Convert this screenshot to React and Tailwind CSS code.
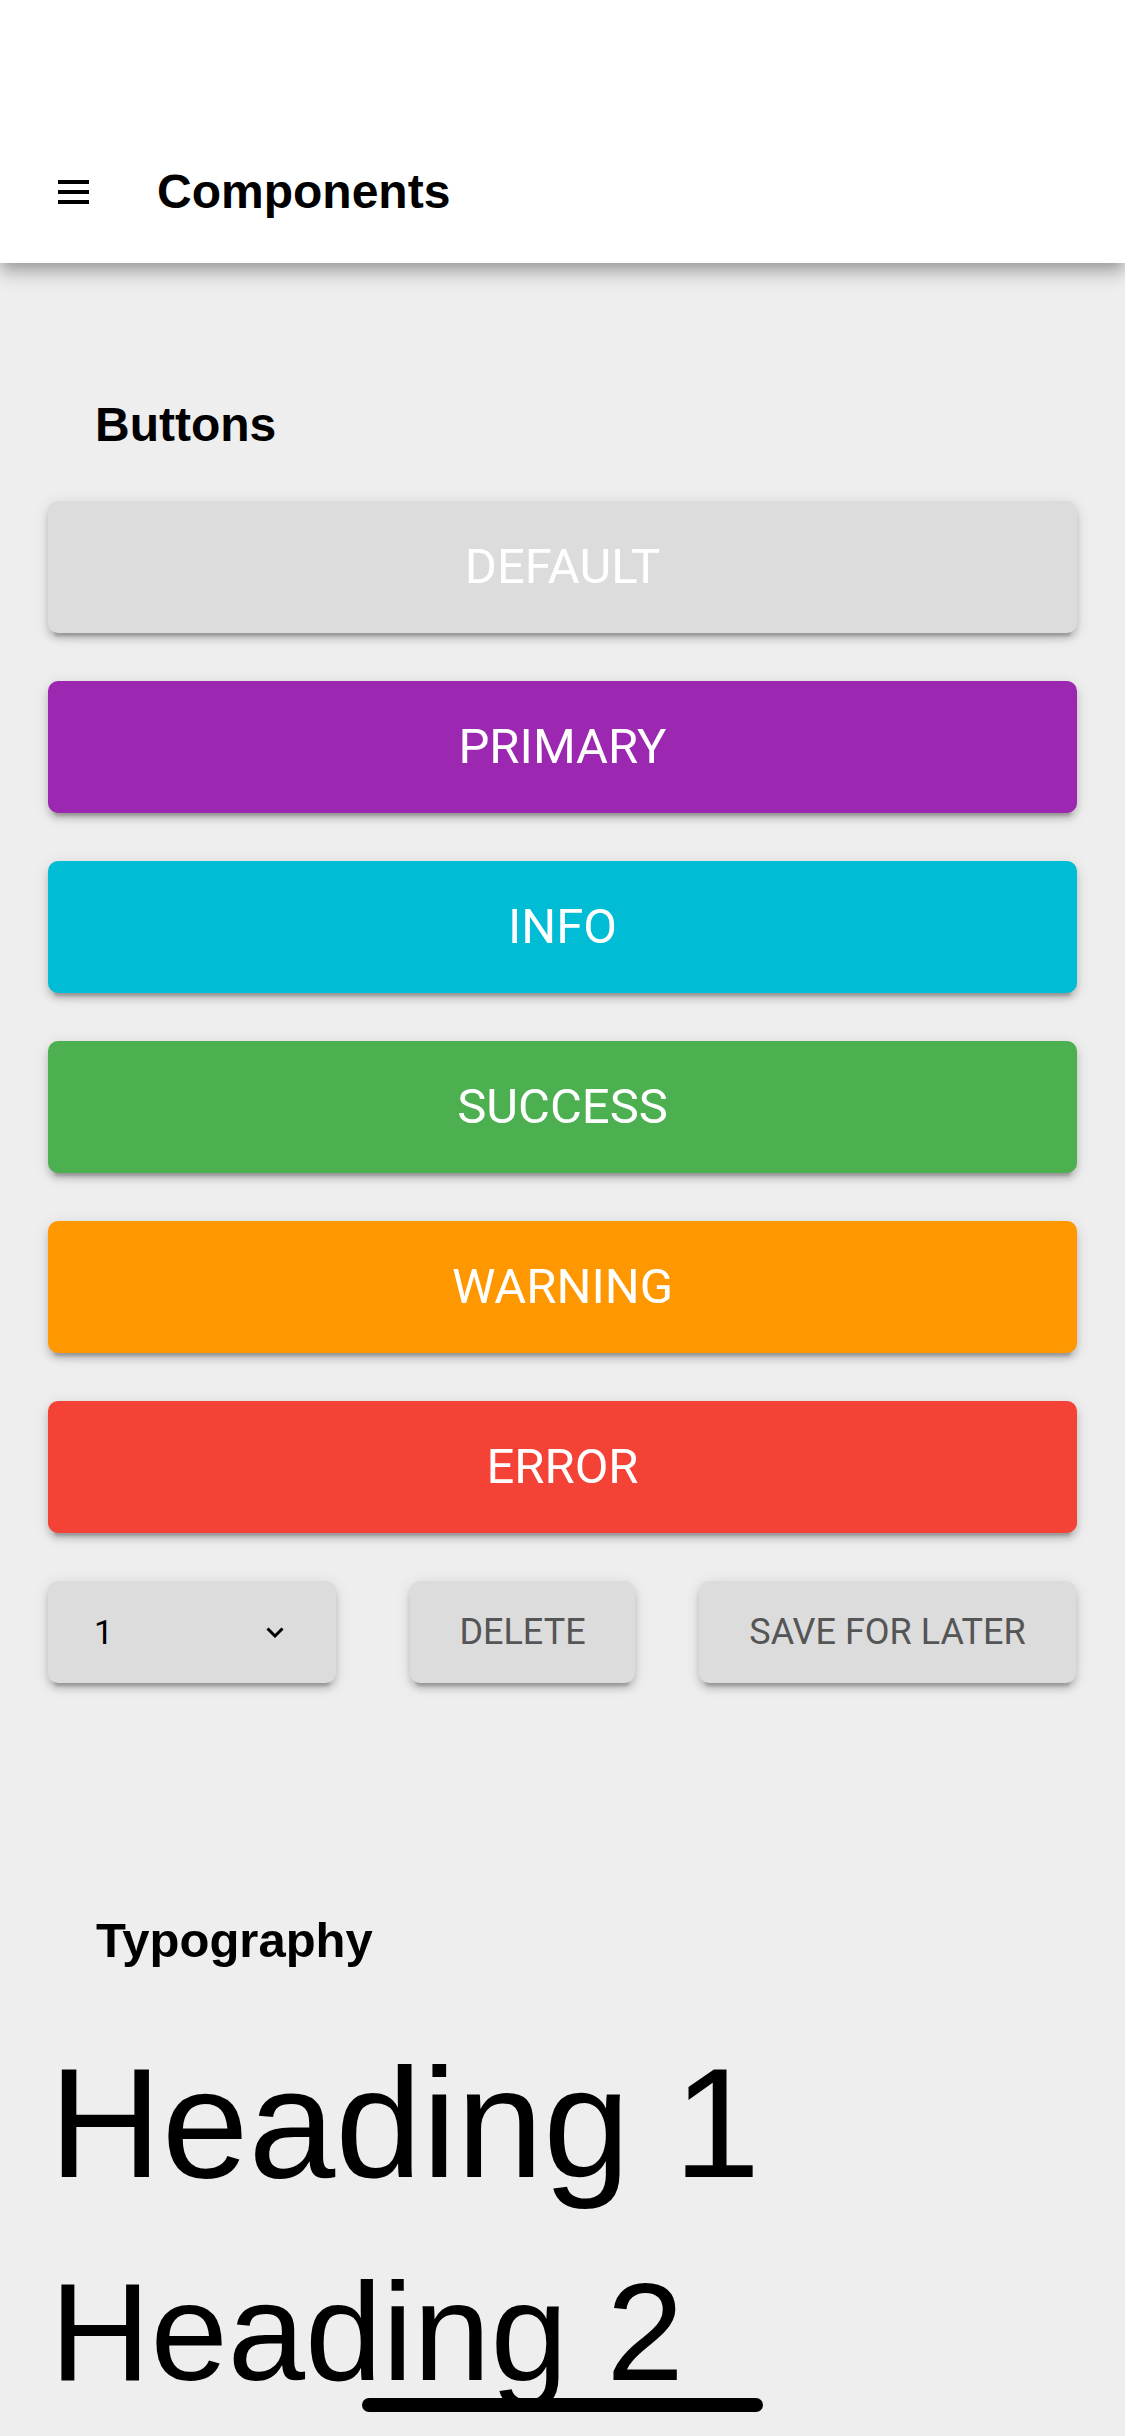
export default function App() {
  const btns = [
    ["DEFAULT", "bg-[#dcdcdc]"],
    ["PRIMARY", "bg-[#9c27b0]"],
    ["INFO", "bg-[#00bcd4]"],
    ["SUCCESS", "bg-[#4caf50]"],
    ["WARNING", "bg-[#ff9800]"],
    ["ERROR", "bg-[#f44336]"],
  ];
  const sh =
    "shadow-[0_9px_3px_-6px_rgba(0,0,0,0.2),0_6px_6px_0_rgba(0,0,0,0.14),0_3px_15px_0_rgba(0,0,0,0.12)]";
  return (
    <div className="relative min-h-[2436px] overflow-hidden bg-[#eeeeee] font-['Liberation_Sans',Arial,sans-serif] text-black">
      <header className="relative z-10 h-[263px] bg-white pt-[136px] shadow-[0_6px_12px_-3px_rgba(0,0,0,0.2),0_12px_15px_0_rgba(0,0,0,0.14),0_3px_30px_0_rgba(0,0,0,0.12)]">
        <div className="flex h-[112px] items-center">
          <div className="ml-[58px] flex w-[31px] flex-col gap-[6px]">
            <div className="h-[4px] bg-black" />
            <div className="h-[4px] bg-black" />
            <div className="h-[4px] bg-black" />
          </div>
          <h1 className="ml-[68px] text-[48px] font-bold leading-[56px]">Components</h1>
        </div>
      </header>
      <main className="px-[48px]">
        <h2 className="mt-[134px] pl-[47px] text-[48px] font-bold leading-[56px]">Buttons</h2>
        <div className="mt-[48px] flex flex-col gap-[48px]">
          {btns.map(([label, bg]) => (
            <button
              key={label}
              className={`flex h-[132px] w-full items-center justify-center rounded-[10px] ${bg} ${sh} font-['Roboto',sans-serif] text-[49px] text-white`}
            >
              {label}
            </button>
          ))}
        </div>
        <div className="mt-[48px] flex h-[102px]">
          <div className={`flex w-[288px] items-center justify-between rounded-[10px] bg-[#dcdcdc] pl-[46px] pr-[52px] ${sh}`}>
            <span className="font-['Roboto',sans-serif] text-[34px]">1</span>
            <svg width="18" height="11" viewBox="0 0 18 11" fill="none">
              <path d="M1.5 1.5 L9 9 L16.5 1.5" stroke="black" strokeWidth="3" />
            </svg>
          </div>
          <button className={`ml-[74px] flex w-[225px] items-center justify-center rounded-[10px] bg-[#dcdcdc] ${sh} font-['Roboto',sans-serif] text-[36px] text-[#555555]`}>
            DELETE
          </button>
          <button className={`ml-[64px] flex w-[377px] items-center justify-center rounded-[10px] bg-[#dcdcdc] ${sh} font-['Roboto',sans-serif] text-[36px] text-[#555555]`}>
            SAVE FOR LATER
          </button>
        </div>
        <h2 className="mt-[229px] pl-[48px] text-[49px] font-bold leading-[56px]">Typography</h2>
        <div className="ml-[1px] mt-[77px] text-[156px] leading-none">Heading 1</div>
        <div className="ml-[2px] mt-[61px] text-[139px] leading-none">Heading 2</div>
      </main>
      <div className="absolute left-[362px] top-[2398px] h-[14px] w-[401px] rounded-full bg-black" />
    </div>
  );
}
